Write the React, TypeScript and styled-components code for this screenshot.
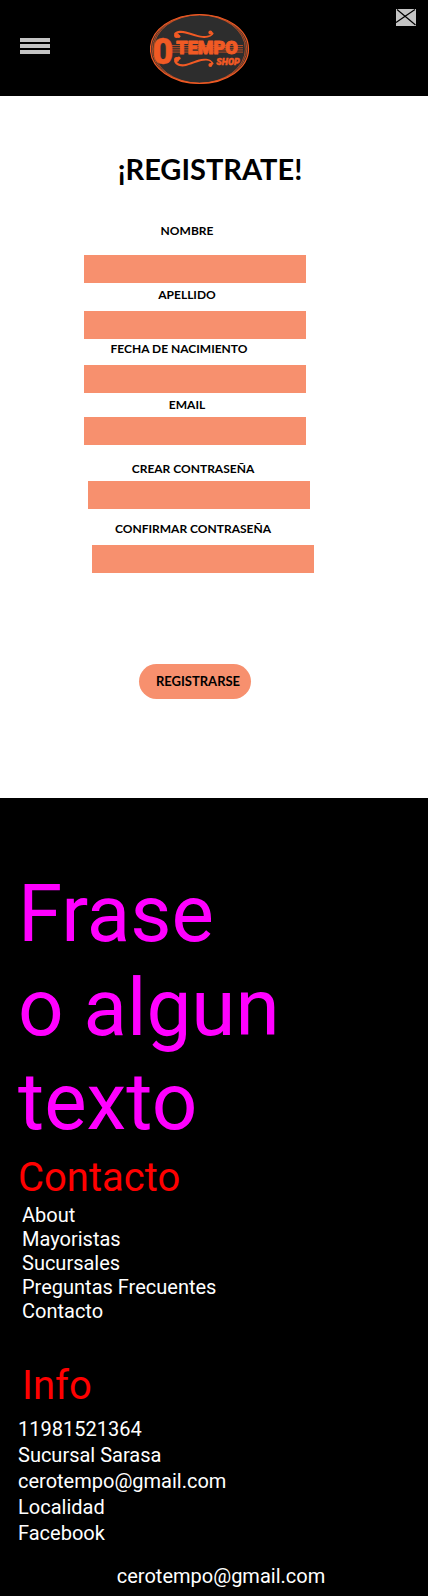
import React from "react";
import styled, { createGlobalStyle } from "styled-components";

const orange = "#f15a24";
const salmon = "#f7906e";

const GlobalStyle = createGlobalStyle`
  *, *::before, *::after { box-sizing: border-box; }
  body { margin: 0; background: #000; font-family: Roboto, sans-serif; }
  h1, h2, p, ul { margin: 0; padding: 0; font-weight: 400; }
`;

const Header = styled.header`
  display: grid;
  grid-template-columns: 7fr auto 9fr;
  align-items: center;
  padding: 8px 12px 6px 20px;
  min-height: 96px;
  background: #000;
`;

const MenuButton = styled.button`
  display: flex;
  flex-direction: column;
  gap: 2px;
  width: 30px;
  margin-bottom: 6px;
  padding: 0;
  border: 0;
  background: none;
  cursor: pointer;
`;

const MenuBar = styled.span`
  height: 4px;
  background: #c4c4c4;
`;

const LogoLink = styled.a`
  display: block;
  line-height: 0;
`;

const CloseButton = styled.button`
  align-self: start;
  justify-self: end;
  display: block;
  width: 20px;
  height: 18px;
  padding: 0;
  border: 0;
  background: none;
  line-height: 0;
  cursor: pointer;
`;

const Main = styled.main`
  padding: 51px 8px 99px 0;
  background: #fff;
  color: #000;
  font-family: Lato, sans-serif;
`;

const Title = styled.h1`
  font-size: 29px;
  font-weight: 700;
  line-height: 44px;
  text-align: center;
`;

const FormArea = styled.div`
  display: flex;
  justify-content: center;
  padding: 32px 30px 0 0;
`;

const Form = styled.form`
  display: flex;
  flex-direction: column;
  width: 222px;
`;

const Field = styled.div<{ $before: number; $gap: number; $indent: number }>`
  display: flex;
  flex-direction: column;
  gap: ${(p) => p.$gap}px;
  width: 100%;
  margin-top: ${(p) => p.$before}px;
  margin-left: ${(p) => p.$indent}px;
`;

const Label = styled.label<{ $trail: number }>`
  padding-right: ${(p) => p.$trail}px;
  font-size: 12px;
  font-weight: 700;
  line-height: 16px;
  text-align: center;
  white-space: nowrap;
`;

const Input = styled.input`
  width: 100%;
  height: 28px;
  padding: 0 8px;
  border: 0;
  border-radius: 0;
  background: ${salmon};
  font: 400 14px Lato, sans-serif;
`;

const Submit = styled.button`
  align-self: center;
  width: 112px;
  height: 35px;
  margin-top: 91px;
  padding: 0 8px 2px 14px;
  border: 0;
  border-radius: 18px;
  background: ${salmon};
  color: #000;
  font: 700 13px Lato, sans-serif;
  white-space: nowrap;
  cursor: pointer;
`;

const Footer = styled.footer`
  padding: 69px 18px 7px;
  background: #000;
  color: #fff;
`;

const Phrase = styled.p`
  color: #f0f;
  font-size: 80px;
  line-height: 94px;
`;

const Group = styled.section<{ $before: number }>`
  margin-top: ${(p) => p.$before}px;
`;

const Heading = styled.h2<{ $indent?: number }>`
  padding-left: ${(p) => p.$indent ?? 0}px;
  color: #f00;
  font-size: 40px;
  line-height: 48px;
`;

const List = styled.ul<{ $before: number; $line: number; $indent?: number }>`
  margin-top: ${(p) => p.$before}px;
  padding-left: ${(p) => p.$indent ?? 0}px;
  list-style: none;
  font-size: 20px;
  line-height: ${(p) => p.$line}px;
`;

const TextLink = styled.a`
  color: inherit;
  text-decoration: none;
`;

const BottomLine = styled.p`
  margin-top: 17px;
  padding-left: 14px;
  font-size: 20px;
  line-height: 26px;
  text-align: center;
`;

const Logo = () => (
  <svg width="100" height="72" viewBox="150 13 100 72" role="img" aria-label="O Tempo Shop">
    <ellipse cx="199.5" cy="49" rx="49" ry="34.5" fill="#2d2d2d" stroke={orange} strokeWidth="1.2" />
    <ellipse cx="199.5" cy="49" rx="47.3" ry="34.3" fill="none" stroke={orange} strokeWidth=".7" />
    <ellipse cx="199.5" cy="49" rx="45.8" ry="34.1" fill="none" stroke={orange} strokeWidth=".6" />
    <path d="M172 45.5H243M172 47.7H243M172 49.9H243M172 52.1H243" stroke={orange} strokeWidth=".7" />
    <g fill={orange}>
      <path d="M174 34.500C174.500 31 180 30 186 31.400C194 33.500 200 36.500 206 36C209.500 35.700 211.500 34.500 212 33L213.300 33C213 36 209 38 204 37.900C197 37.700 191 34.600 184 33.300C180 32.700 177 33 176.500 34.500Z" />
      <circle cx="176.600" cy="35.400" r="2.500" />
      <circle cx="178.800" cy="36.300" r="1.600" />
      <circle cx="210.400" cy="32.600" r="2" />
      <circle cx="212" cy="33.600" r="1.400" />
      <path d="M174 60.500C174.500 65 180 67.500 186 66C194 64 200 60.500 206 60.600C209.500 60.700 211.500 62 212 64L213.300 64C213 60.500 209 58.600 204 58.700C197 59 191 63 184 64.200C180 64.700 177 63.500 176.500 60.500Z" />
      <circle cx="176.600" cy="59.600" r="2.500" />
      <circle cx="178.800" cy="58.200" r="1.800" />
      <circle cx="210.400" cy="64.900" r="2" />
      <circle cx="212" cy="63.600" r="1.400" />
    </g>
    <g
      fontFamily="Roboto, sans-serif"
      fontWeight="900"
      fill={orange}
      stroke={orange}
      textAnchor="middle"
      strokeLinejoin="round"
    >
      <text x="163" y="63.500" fontSize="36" strokeWidth=".4">0</text>
      <text x="207" y="54" fontSize="18" strokeWidth="1">TEMPO</text>
      <text x="228" y="65" fontSize="9" fontStyle="italic" strokeWidth=".5">SHOP</text>
    </g>
  </svg>
);

const fields = [
  { id: "nombre", label: "NOMBRE", type: "text", before: 0, gap: 16, indent: 0, trail: 16 },
  { id: "apellido", label: "APELLIDO", type: "text", before: 4, gap: 8, indent: 0, trail: 16 },
  { id: "nacimiento", label: "FECHA DE NACIMIENTO", type: "text", before: 2, gap: 8, indent: 0, trail: 32 },
  { id: "email", label: "EMAIL", type: "email", before: 4, gap: 4, indent: 0, trail: 16 },
  { id: "clave", label: "CREAR CONTRASEÑA", type: "password", before: 16, gap: 4, indent: 4, trail: 12 },
  { id: "confirmar", label: "CONFIRMAR CONTRASEÑA", type: "password", before: 12, gap: 8, indent: 8, trail: 20 },
];

const links = ["About", "Mayoristas", "Sucursales", "Preguntas Frecuentes", "Contacto"];

export default function App() {
  return (
    <>
      <GlobalStyle />
      <Header>
        <MenuButton type="button" aria-label="Menú">
          <MenuBar />
          <MenuBar />
          <MenuBar />
        </MenuButton>
        <LogoLink href="#">
          <Logo />
        </LogoLink>
        <CloseButton type="button" aria-label="Cerrar">
          <svg width="20" height="18" viewBox="0 0 20 18">
            <path d="M0 1H20V18H0Z" fill="#c4c4c4" />
            <path d="M1 1.500L19.500 17M0 14.500L19 1.500" stroke="#000" strokeWidth="1.200" />
          </svg>
        </CloseButton>
      </Header>
      <Main>
        <Title>¡REGISTRATE!</Title>
        <FormArea>
          <Form onSubmit={(e) => e.preventDefault()}>
            {fields.map((f) => (
              <Field key={f.id} $before={f.before} $gap={f.gap} $indent={f.indent}>
                <Label htmlFor={f.id} $trail={f.trail}>{f.label}</Label>
                <Input id={f.id} name={f.id} type={f.type} />
              </Field>
            ))}
            <Submit type="submit">REGISTRARSE</Submit>
          </Form>
        </FormArea>
      </Main>
      <Footer>
        <Phrase>
          Frase
          <br />
          o algun
          <br />
          texto
        </Phrase>
        <Group $before={5}>
          <Heading>Contacto</Heading>
          <List $before={1} $line={24} $indent={4}>
            {links.map((text) => (
              <li key={text}>
                <TextLink href="#">{text}</TextLink>
              </li>
            ))}
          </List>
        </Group>
        <Group $before={39}>
          <Heading $indent={4}>Info</Heading>
          <List $before={6} $line={26}>
            <li>11981521364</li>
            <li>Sucursal Sarasa</li>
            <li><TextLink href="mailto:cerotempo@gmail.com">cerotempo@gmail.com</TextLink></li>
            <li>Localidad</li>
            <li><TextLink href="#">Facebook</TextLink></li>
          </List>
        </Group>
        <BottomLine>
          <TextLink href="mailto:cerotempo@gmail.com">cerotempo@gmail.com</TextLink>
        </BottomLine>
      </Footer>
    </>
  );
}
